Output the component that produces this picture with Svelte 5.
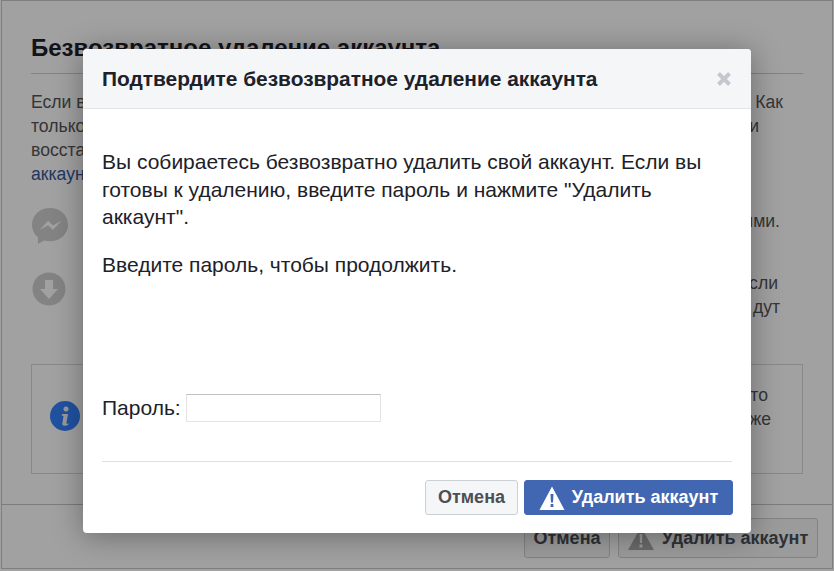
<script>
  const lines = [
    ['Если в', 'Как', 'r1'],
    ['только', 'и', 'r2'],
    ['восста', '', 'r1'],
  ];
</script>

<div class="page">
  <div class="card">
    <div class="content">
      <h2>Безвозвратное удаление аккаунта</h2>
      <div class="lines">
        {#each lines as l}
          <div class="line"><span>{l[0]}</span><span class={l[2]}>{l[1]}</span></div>
        {/each}
        <div class="line"><a href="#a">аккаунт</a></div>
      </div>
      <div class="feature one">
        <svg width="38" height="38" viewBox="0 0 38 38">
          <path fill="#d0d0d0" d="M19 1C8.800 1 1 8.300 1 17.800c0 5.100 2.200 9.500 5.900 12.500V37l6.200-3.500c1.900.5 3.800.8 5.900.8 10.200 0 18-7.100 18-16.500S29.200 1 19 1z"/>
          <path fill="#fff" d="M8.500 23l8.700-9.300 4.700 4.700 8.600-4.700-8.700 9.400-4.600-4.800z"/>
        </svg>
        <span class="end1">ими.</span>
      </div>
      <div class="feature two">
        <svg width="34" height="34" viewBox="0 0 34 34">
          <circle cx="17" cy="17" r="16.500" fill="#d0d0d0"/>
          <path fill="#fff" d="M13 8h8v9h5L17 27 8 17h5z"/>
        </svg>
        <div class="ends"><span class="end2">сли</span><span class="end1">дут</span></div>
      </div>
      <div class="notice">
        <svg width="30" height="30" viewBox="0 0 30 30">
          <circle cx="15" cy="15" r="15" fill="#3482ff"/>
          <circle cx="16" cy="8" r="2.500" fill="#f2f2f2"/>
          <path fill="#f2f2f2" d="M12 13h6l-1.600 9c0 .8.800.9 2 .4l-.3 1.500c-2.600 1.300-6 1.200-5.800-1.500l1.200-7.500-1.800-.3z"/>
        </svg>
        <div class="ends"><span class="end3">то</span><span>же</span></div>
      </div>
    </div>
    <div class="foot">
      <button class="ghost g1">Отмена</button>
      <button class="ghost g2">
        <svg width="26" height="23" viewBox="0 0 26 23"><path fill="#a8a8a8" d="M13 0 26 23H0z"/><path fill="#f5f6f7" d="M11.500 7h3l-.5 9h-2zM11.500 17.500h3v3h-3z"/></svg>
        Удалить аккаунт
      </button>
    </div>
  </div>

  <div class="overlay"></div>

  <div class="modal">
    <header>
      <h1>Подтвердите безвозвратное удаление аккаунта</h1>
      <svg class="x" width="16" height="16" viewBox="0 0 16 16"><path d="M2.500 2.500l11 11M13.500 2.500l-11 11" stroke="#c4c7cc" stroke-width="4"/></svg>
    </header>
    <div class="body">
      <p>Вы собираетесь безвозвратно удалить свой аккаунт. Если вы готовы к удалению, введите пароль и нажмите "Удалить аккаунт".</p>
      <p class="second">Введите пароль, чтобы продолжить.</p>
      <label class="pw">Пароль: <input type="password" /></label>
    </div>
    <div class="actions">
      <button class="cancel">Отмена</button>
      <button class="primary">
        <svg width="26" height="24" viewBox="0 0 28 24" preserveAspectRatio="none"><path fill="#fff" d="M14 0.500 27.500 24H.5z"/><path fill="#4267b2" d="M12.400 8h3.200l-.5 8.500h-2.200zM12.500 18h3v3h-3z"/></svg>
        Удалить аккаунт
      </button>
    </div>
  </div>
</div>

<style>
  :global(body) { margin: 0; }
  * { box-sizing: border-box; }
  .page {
    position: relative;
    width: 834px;
    height: 571px;
    overflow: hidden;
    background: #fff;
    font-family: "Liberation Sans", Arial, sans-serif;
    color: #1d2129;
  }
  .card {
    height: 569px;
    margin: 0 1px;
    border: 1px solid #c9c9c9;
    display: flex;
    flex-direction: column;
  }
  .content { flex: 1; padding: 33px 29px 0 29px; }
  h2 {
    margin: 0;
    font-size: 24px;
    line-height: 28px;
    font-weight: 700;
    padding-bottom: 11px;
    border-bottom: 1px solid #cfcfcf;
    white-space: nowrap;
  }
  .lines { margin-top: 16px; font-size: 17.6px; line-height: 24px; color: #555; }
  .line { display: flex; justify-content: space-between; }
  .line a { color: #365899; text-decoration: none; }
  .r1 { margin-right: 20px; }
  .r2 { margin-right: 44px; }
  .feature { display: flex; justify-content: space-between; font-size: 17.6px; line-height: 24px; color: #555; }
  .one { margin-top: 21px; height: 37px; align-items: flex-start; }
  .end1 { margin-right: 23px; }
  .end2 { margin-right: 25px; }
  .end3 { margin-right: 3px; }
  .one .end1 { margin-top: 2px; }
  .two { height: 60px; margin-top: 28px; padding-left: 1px; }
  .ends { display: flex; flex-direction: column; align-items: flex-end; }
  .two .ends { margin-top: -1px; }
  .notice {
    margin-top: 32px;
    height: 110px;
    border: 1px solid #d8d8d8;
    padding: 18px 31px 0 18px;
    display: flex;
    justify-content: space-between;
    align-items: flex-start;
    font-size: 17.6px;
    line-height: 24px;
    color: #555;
  }
  .notice svg { margin-top: 18px; }
  .foot {
    height: 64px;
    border-top: 1px solid #c4c4c4;
    display: flex;
    justify-content: flex-end;
    align-items: flex-start;
    gap: 8px;
    padding: 13px 14px 0 0;
  }
  .ghost {
    height: 40px;
    padding: 0;
    display: flex;
    align-items: center;
    justify-content: center;
    gap: 8px;
    background: #f5f6f7;
    border: 1px solid #ccd0d5;
    border-radius: 3px;
    font: 700 18px "Liberation Sans", Arial, sans-serif;
    color: #4b4f56;
  }
  .g1 { width: 86px; }
  .g2 { width: 200px; }
  .overlay { position: absolute; inset: 0; background: rgba(0, 0, 0, 0.37); }
  .modal {
    position: absolute;
    left: 83px;
    top: 49px;
    width: 668px;
    height: 484px;
    background: #fff;
    border-radius: 4px;
    box-shadow: 0 3px 30px rgba(0, 0, 0, 0.35);
    display: flex;
    flex-direction: column;
  }
  header {
    height: 60px;
    flex: none;
    display: flex;
    align-items: center;
    justify-content: space-between;
    padding: 0 19px;
    background: #f5f6f7;
    border-bottom: 1px solid #e5e5e5;
    border-radius: 4px 4px 0 0;
  }
  h1 { margin: 0; font-size: 20.9px; line-height: 24px; font-weight: 700; color: #1d2129; white-space: nowrap; }
  .x { flex: none; }
  .body {
    flex: 1;
    margin: 0 19px;
    padding-top: 39px;
    border-bottom: 1px solid #dddfe2;
    font-size: 21px;
    line-height: 27.5px;
    display: flex;
    flex-direction: column;
  }
  p { margin: 0; }
  .second { margin-top: 20.5px; }
  .pw {
    margin-top: auto;
    margin-bottom: 39px;
    display: flex;
    align-items: center;
    gap: 5px;
  }
  input {
    width: 195px;
    height: 28px;
    padding: 0 4px;
    border: 1px solid #e4e4e4;
    border-top-color: #c0c0c0;
    background: #fff;
    outline: none;
  }
  .actions {
    height: 71px;
    flex: none;
    display: flex;
    justify-content: flex-end;
    align-items: flex-start;
    gap: 6px;
    padding: 18px 18px 0 0;
  }
  .actions button {
    height: 35px;
    padding: 0;
    border-radius: 3px;
    font: 700 18px "Liberation Sans", Arial, sans-serif;
    display: flex;
    align-items: center;
  }
  .cancel { width: 93px; justify-content: center; background: #f5f6f7; border: 1px solid #ccd0d5; color: #4b4f56; }
  .primary { width: 209px; justify-content: center; gap: 7px; background: #4267b2; border: 1px solid #4267b2; color: #fff; }
</style>
